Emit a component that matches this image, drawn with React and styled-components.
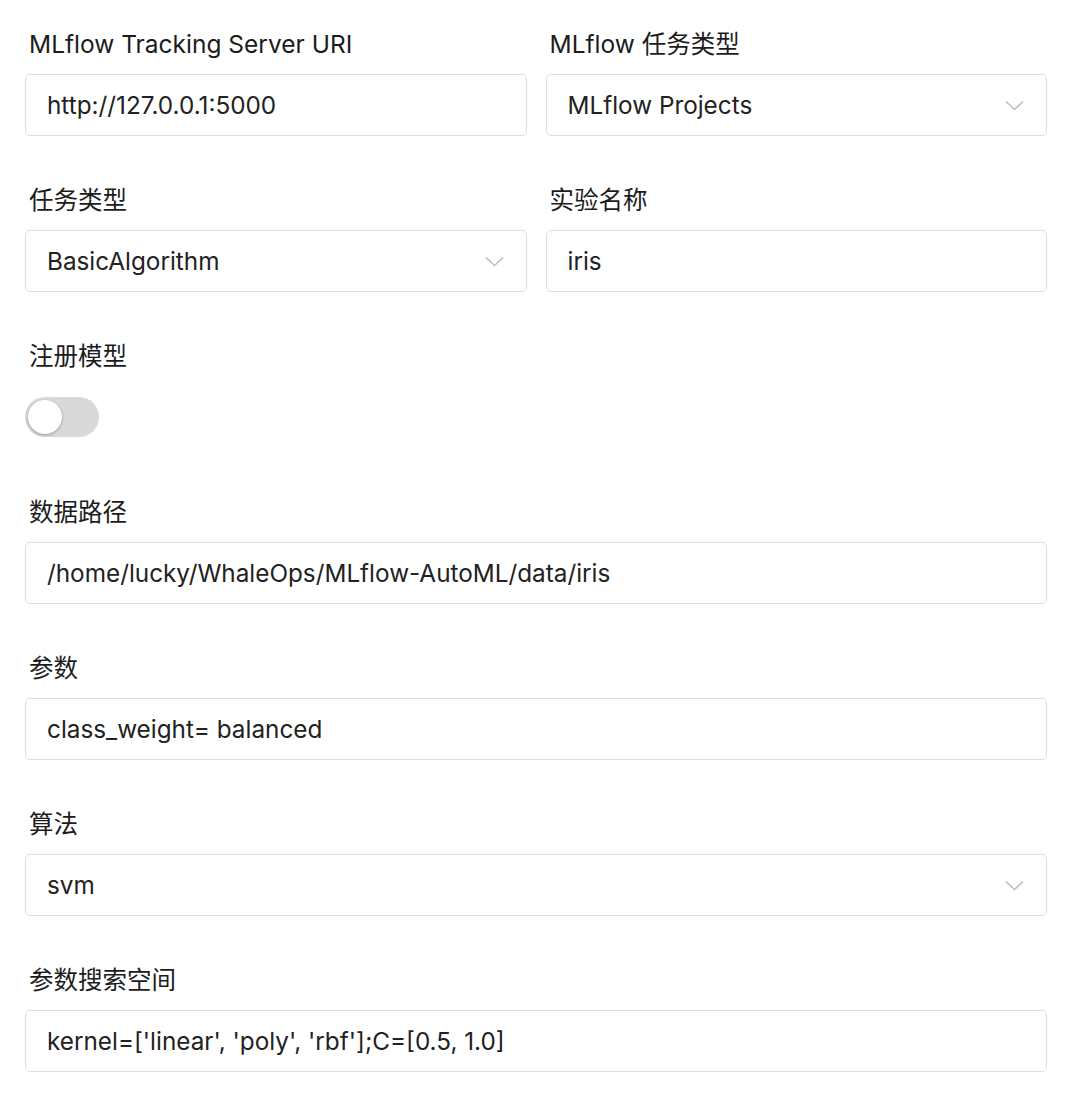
import React from "react";
import styled, { createGlobalStyle } from "styled-components";

const GlobalStyle = createGlobalStyle`
    body {
        margin: 0;
        background: #fff;
        font-family: Inter, "Noto Sans", "Noto Sans CJK SC", sans-serif;
        color: #1f1f1f;
    }
`;

const Form = styled.div`
    width: 1022px;
    padding: 26px 0 0 25px;
    display: grid;
    grid-template-columns: 1fr 1fr;
    column-gap: 19px;
    row-gap: 46px;
`;

const Field = styled.div`
    grid-column: ${props => (props.full ? "1 / -1" : "auto")};
    display: flex;
    flex-direction: column;
`;

const Label = styled.label`
    height: 36px;
    line-height: 36px;
    margin-bottom: 12px;
    padding-left: 4px;
    font-size: 24.5px;
    color: #1c1c1c;
`;

const Box = styled.div`
    height: 62px;
    box-sizing: border-box;
    border: 1.5px solid #dcdce2;
    border-radius: 5px;
    display: flex;
    align-items: center;
    padding: 0 22px 0 21px;
    font-size: 24.3px;
    color: #222;
    background: #fff;
`;

const Value = styled.span`
    flex: 1;
    white-space: nowrap;
`;

const Chevron = styled.svg`
    width: 19px;
    height: 11px;
`;

const SwitchRow = styled.div`
    height: 62px;
    display: flex;
    align-items: center;
`;

const Switch = styled.div`
    width: 74px;
    height: 40px;
    border-radius: 20px;
    background: #d9d9d9;
    position: relative;
`;

const Knob = styled.span`
    position: absolute;
    top: 3px;
    left: 3px;
    width: 34px;
    height: 34px;
    border-radius: 50%;
    background: #fff;
    box-shadow: 0 1px 3px rgba(0, 0, 0, 0.3);
`;

const Select = ({ value }) => (
    <Box>
        <Value>{value}</Value>
        <Chevron viewBox="0 0 19 11" fill="none">
            <path d="M1 1.5 L9.5 9.5 L18 1.5" stroke="#bdbdbd" strokeWidth="1.6" />
        </Chevron>
    </Box>
);

const Input = ({ value }) => (
    <Box>
        <Value>{value}</Value>
    </Box>
);

const App = () => (
    <>
        <GlobalStyle />
        <Form>
            <Field>
                <Label>MLflow Tracking Server URI</Label>
                <Input value="http://127.0.0.1:5000" />
            </Field>
            <Field>
                <Label>MLflow 任务类型</Label>
                <Select value="MLflow Projects" />
            </Field>
            <Field>
                <Label>任务类型</Label>
                <Select value="BasicAlgorithm" />
            </Field>
            <Field>
                <Label>实验名称</Label>
                <Input value="iris" />
            </Field>
            <Field full>
                <Label>注册模型</Label>
                <SwitchRow>
                    <Switch>
                        <Knob />
                    </Switch>
                </SwitchRow>
            </Field>
            <Field full>
                <Label>数据路径</Label>
                <Input value="/home/lucky/WhaleOps/MLflow-AutoML/data/iris" />
            </Field>
            <Field full>
                <Label>参数</Label>
                <Input value="class_weight= balanced" />
            </Field>
            <Field full>
                <Label>算法</Label>
                <Select value="svm" />
            </Field>
            <Field full>
                <Label>参数搜索空间</Label>
                <Input value="kernel=['linear', 'poly', 'rbf'];C=[0.5, 1.0]" />
            </Field>
        </Form>
    </>
);

export default App;
